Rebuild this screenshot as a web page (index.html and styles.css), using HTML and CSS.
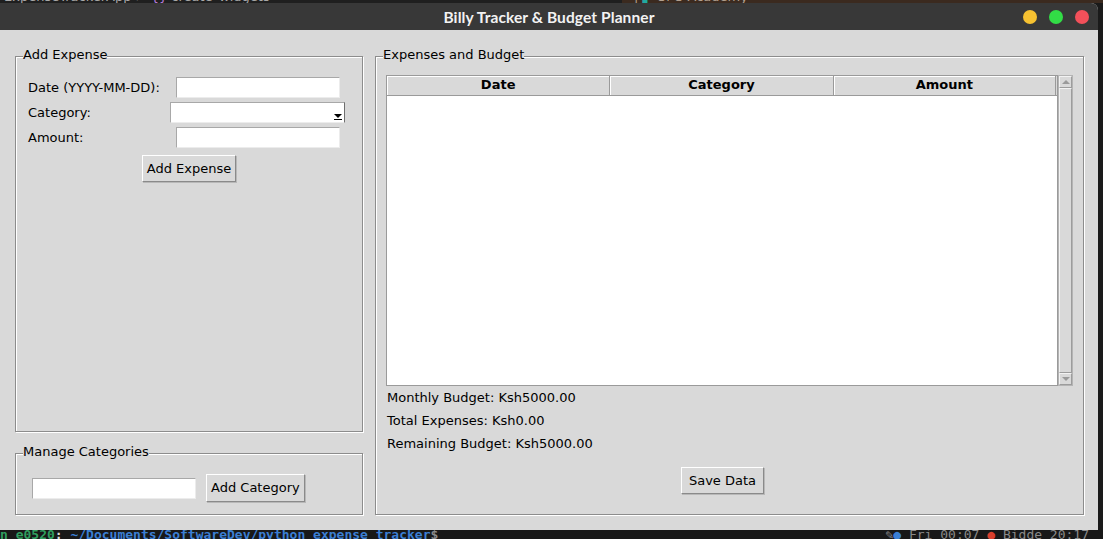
FILE: index.html
```html
<!DOCTYPE html>
<html>
<head>
<meta charset="utf-8">
<title>Billy Tracker &amp; Budget Planner</title>
<link rel="stylesheet" href="styles.css">
</head>
<body>
<div class="top-strip">
  <div class="ts-left"><span class="ts-text">ExpenseTrackerApp &gt; <span class="ts-purple">{}</span> create_widgets</span></div>
  <div class="ts-right"><span class="ts-text ts-dim">| <span class="ts-teal">▌</span> Ul U Academy</span></div>
</div>
<div class="window">
  <div class="titlebar">
    <span></span>
    <span class="title">Billy Tracker &amp; Budget Planner</span>
    <div class="dots">
      <span class="dot yellow"></span>
      <span class="dot green"></span>
      <span class="dot red"></span>
    </div>
  </div>
  <div class="content">
    <div class="left-col">
      <div class="lframe add-frame">
        <span class="lf-label">Add Expense</span>
        <div class="form-grid">
          <span class="lbl">Date (YYYY-MM-DD):</span>
          <div class="entry"></div>
          <span class="lbl">Category:</span>
          <div class="combo"><span class="combo-field"></span><span class="combo-arrow"><span class="tri-down"></span><span class="tri-bar"></span></span></div>
          <span class="lbl">Amount:</span>
          <div class="entry"></div>
        </div>
        <div class="btn-row">
          <button class="btn">Add Expense</button>
        </div>
      </div>
      <div class="lframe cat-frame">
        <span class="lf-label">Manage Categories</span>
        <div class="cat-row">
          <div class="entry"></div>
          <button class="btn btn-tall">Add Category</button>
        </div>
      </div>
    </div>
    <div class="lframe exp-frame">
      <span class="lf-label">Expenses and Budget</span>
      <div class="exp-grid">
        <div class="tree">
          <div class="tree-head">
            <span class="th">Date</span>
            <span class="th">Category</span>
            <span class="th">Amount</span>
          </div>
          <div class="tree-body"></div>
        </div>
        <div class="vscroll">
          <span class="sb-arrow"><span class="tri-up-g"></span></span>
          <span class="sb-thumb"></span>
          <span class="sb-arrow"><span class="tri-down-g"></span></span>
        </div>
        <div class="summary">
          <span class="sum-line">Monthly Budget: Ksh5000.00</span>
          <span class="sum-line">Total Expenses: Ksh0.00</span>
          <span class="sum-line">Remaining Budget: Ksh5000.00</span>
          <div class="save-row"><button class="btn btn-save">Save Data</button></div>
        </div>
      </div>
    </div>
  </div>
</div>
<div class="bottom-strip">
  <span class="term"><span class="t-green">n e0520</span><span class="t-white">:</span><span class="t-blue"> ~/Documents/SoftwareDev/python_expense_tracker</span><span class="t-grey">$</span></span>
  <span class="tray"><span class="t-grey">✎</span><span class="t-blue">●</span><span class="t-grey"> Fri 00:07</span><span class="t-red"> ●</span><span class="t-grey"> Bidde 20:17</span></span>
</div>
</body>
</html>
```

FILE: styles.css
```css
* { box-sizing: border-box; }

html, body {
  margin: 0;
  padding: 0;
}

body {
  width: 1103px;
  height: 539px;
  overflow: hidden;
  background: #1a1a1a;
  font-family: "DejaVu Sans", sans-serif;
  font-size: 13px;
  color: #000;
}

/* background terminal strips */
.top-strip {
  height: 3px;
  display: flex;
  overflow: hidden;
}
.ts-left {
  width: 622px;
  background: #1f1f1f;
  overflow: hidden;
}
.ts-right {
  flex: 1;
  background: #3b2a1f;
  overflow: hidden;
  padding-left: 8px;
}
.ts-text {
  display: block;
  margin-top: -9px;
  line-height: 12px;
  font-size: 13px;
  color: #a8a8a8;
  white-space: nowrap;
  padding-left: 4px;
}
.ts-purple { color: #b478d8; }
.ts-dim { color: #b0a090; }
.ts-teal { color: #22a8a0; }

.bottom-strip {
  height: 9px;
  display: flex;
  justify-content: space-between;
  overflow: hidden;
  background: #181818;
}
.term, .tray {
  display: block;
  line-height: 10px;
  font-family: "DejaVu Sans Mono", monospace;
  font-weight: bold;
  font-size: 13px;
  white-space: nowrap;
}
.tray { padding-right: 14px; font-weight: normal; }
.t-green { color: #2f9e5f; }
.t-white { color: #dddddd; }
.t-blue { color: #3b7fd4; }
.t-grey { color: #8a8a8a; }
.t-red { color: #d8402e; }

/* window */
.window {
  width: 1098px;
  height: 527px;
  background: #d9d9d9;
  border-top-right-radius: 7px;
  overflow: hidden;
  display: flex;
  flex-direction: column;
}

.titlebar {
  height: 27px;
  flex: none;
  background: #383838;
  display: grid;
  grid-template-columns: 1fr auto 1fr;
  align-items: center;
}
.title {
  color: #f2f2f2;
  font-family: "Lato", "Open Sans", sans-serif;
  font-weight: 700;
  font-size: 15.5px;
  letter-spacing: 0.1px;
}
.dots {
  justify-self: end;
  display: flex;
  gap: 12px;
  padding-right: 9px;
}
.dot {
  width: 14px;
  height: 14px;
  border-radius: 50%;
  display: block;
}
.yellow { background: #f6c131; }
.green { background: #32dd46; }
.red { background: #f2505a; }

.content {
  flex: 1;
  padding: 26px 14px 15px 15px;
  display: grid;
  grid-template-columns: 348px 709px;
  column-gap: 12px;
}

.left-col {
  display: flex;
  flex-direction: column;
  gap: 21px;
}

/* tk labelframe with groove relief */
.lframe {
  position: relative;
  border: 1px solid #8c8c8c;
  box-shadow: inset 1px 1px 0 #ffffff, 1px 1px 0 #ffffff;
}
.lf-label {
  position: absolute;
  top: -10px;
  left: 7px;
  line-height: 16px;
  background: #d9d9d9;
  white-space: nowrap;
}

.add-frame {
  height: 376px;
  padding-top: 20px;
}
.form-grid {
  margin-left: 12px;
  display: grid;
  grid-template-columns: 142px 175px;
  grid-auto-rows: 21px;
  row-gap: 4px;
  align-items: center;
}
.lbl {
  line-height: 16px;
  white-space: nowrap;
}

.entry {
  width: 164px;
  height: 21px;
  justify-self: center;
  background: #ffffff;
  border: 1px solid;
  border-color: #a8a8a8 #ececec #ececec #a8a8a8;
}

.combo {
  width: 175px;
  height: 21px;
  display: flex;
  background: #ffffff;
  border: 1px solid;
  border-color: #a8a8a8 #6e6e6e #ececec #a8a8a8;
}
.combo-field { flex: 1; }
.combo-arrow {
  width: 12px;
  display: flex;
  flex-direction: column;
  align-items: center;
  justify-content: flex-end;
  padding-bottom: 2px;
}
.tri-down {
  width: 0;
  height: 0;
  border-left: 4px solid transparent;
  border-right: 4px solid transparent;
  border-top: 4px solid #000;
}
.tri-bar {
  width: 8px;
  height: 1px;
  margin-top: 1px;
  background: #000;
}

.btn-row {
  margin-top: 7px;
  display: flex;
  justify-content: center;
}

.btn {
  font-family: "DejaVu Sans", sans-serif;
  font-size: 13px;
  color: #000;
  background: #d9d9d9;
  height: 27px;
  padding: 0 4px;
  border: 1px solid;
  border-color: #ffffff #8a8a8a #8a8a8a #ffffff;
  box-shadow: 1px 1px 0 #b8b8b8;
  line-height: 16px;
  margin: 0;
  border-radius: 0;
}
.btn-tall { height: 28px; }
.btn-save { padding: 0 7px; }

.cat-frame {
  height: 62px;
  padding: 20px 0 0 16px;
}
.cat-row {
  display: flex;
  align-items: center;
  gap: 10px;
}

.exp-frame {
  height: 459px;
  padding: 18px 0 0 10px;
}
.exp-grid {
  display: grid;
  grid-template-columns: 672px 15px;
}

.tree {
  height: 311px;
  border: 1px solid #9a9a9a;
  display: flex;
  flex-direction: column;
  background: #ffffff;
}
.tree-head {
  height: 20px;
  display: grid;
  grid-template-columns: 1fr 1fr 1fr;
  border-bottom: 1px solid #9a9a9a;
  background: #d9d9d9;
}
.th {
  font-weight: bold;
  text-align: center;
  line-height: 18px;
  border-right: 1px solid #9a9a9a;
  box-shadow: inset 1px 1px 0 #ffffff;
}
.th:last-child { margin-right: 1px; }
.tree-body { flex: 1; }

.vscroll {
  height: 311px;
  display: flex;
  flex-direction: column;
  border: 1px solid #b4b4b4;
  background: #d9d9d9;
}
.sb-arrow {
  height: 12px;
  flex: none;
  display: flex;
  align-items: center;
  justify-content: center;
  border: 1px solid;
  border-color: #f2f2f2 #9c9c9c #9c9c9c #f2f2f2;
}
.sb-thumb {
  flex: 1;
  border: 1px solid;
  border-color: #f2f2f2 #9c9c9c #9c9c9c #f2f2f2;
}
.tri-up-g {
  width: 0;
  height: 0;
  border-left: 4px solid transparent;
  border-right: 4px solid transparent;
  border-bottom: 4px solid #9a9a9a;
}
.tri-down-g {
  width: 0;
  height: 0;
  border-left: 4px solid transparent;
  border-right: 4px solid transparent;
  border-top: 4px solid #9a9a9a;
}

.summary {
  display: flex;
  flex-direction: column;
  padding-left: 1px;
}
.sum-line {
  line-height: 23px;
  white-space: nowrap;
}
.save-row {
  margin-top: 12px;
  display: flex;
  justify-content: center;
}
```
